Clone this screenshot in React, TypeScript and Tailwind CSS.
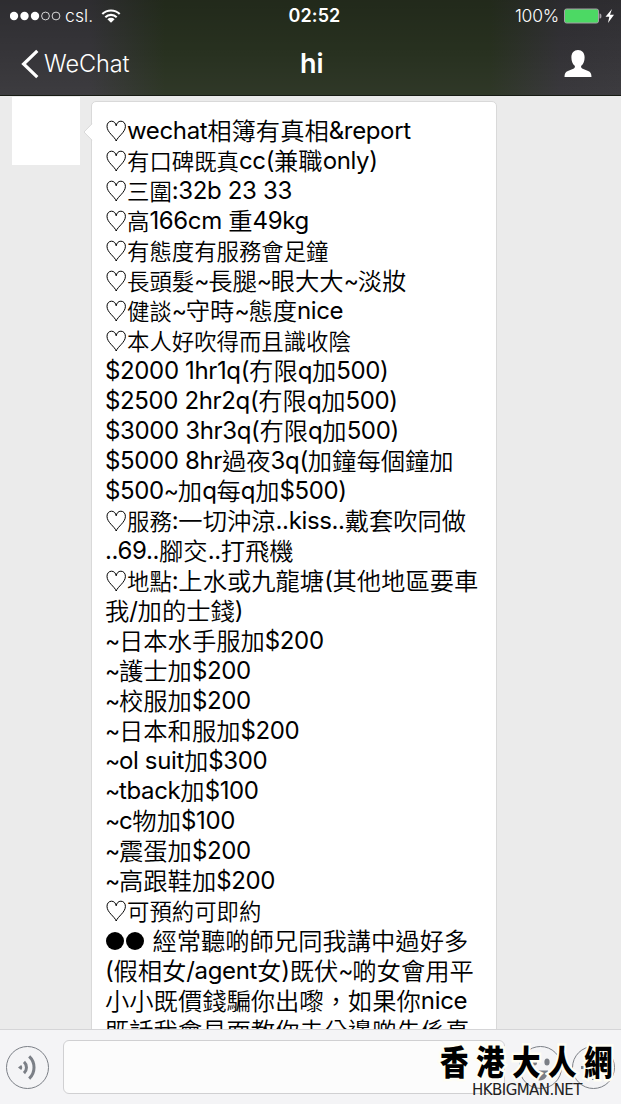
const MESSAGE = [
  "♡wechat相簿有真相&report",
  "♡有口碑既真cc(兼職only)",
  "♡三圍:32b 23 33",
  "♡高166cm 重49kg",
  "♡有態度有服務會足鐘",
  "♡長頭髮~長腿~眼大大~淡妝",
  "♡健談~守時~態度nice",
  "♡本人好吹得而且識收陰",
  "$2000 1hr1q(冇限q加500)",
  "$2500 2hr2q(冇限q加500)",
  "$3000 3hr3q(冇限q加500)",
  "$5000 8hr過夜3q(加鐘每個鐘加",
  "$500~加q每q加$500)",
  "♡服務:一切沖涼..kiss..戴套吹同做",
  "..69..腳交..打飛機",
  "♡地點:上水或九龍塘(其他地區要車",
  "我/加的士錢)",
  "~日本水手服加$200",
  "~護士加$200",
  "~校服加$200",
  "~日本和服加$200",
  "~ol suit加$300",
  "~tback加$100",
  "~c物加$100",
  "~震蛋加$200",
  "~高跟鞋加$200",
  "♡可預約可即約",
  "●● 經常聽啲師兄同我講中過好多",
  "(假相女/agent女)既伏~啲女會用平",
  "小小既價錢騙你出嚟，如果你nice",
  "既話我會見面教你去分邊啲先係真",
];

export default function App() {
  return (
    <div className="flex h-[1104px] w-[621px] flex-col overflow-hidden bg-[#ebebeb] font-['Inter','Noto_Sans_CJK_TC',sans-serif]">
      <Header />
      <main className="flex min-h-0 flex-1 items-start overflow-hidden pl-3">
        <div className="mt-px h-[68px] w-[68px] shrink-0 bg-white" />
        <Bubble />
      </main>
      <InputBar />
    </div>
  );
}

function Header() {
  return (
    <header className="h-24 shrink-0 border-b border-[#171b14] bg-[linear-gradient(to_bottom,rgba(0,0,0,0.14),transparent_50%,rgba(255,255,255,0.04)),linear-gradient(to_right,#353438_0px,#353438_90px,#27301f_165px,#27301f_490px,#323135_560px,#353438_621px)] text-white">
      <div className="flex h-8 items-center pl-[10px] pr-[6px]">
        <div className="flex flex-1 items-center">
          <svg width="51" height="10" viewBox="0 0 51 10" fill="white">
            <circle cx="4" cy="5" r="4.2" />
            <circle cx="14.5" cy="5" r="4.2" />
            <circle cx="25" cy="5" r="4.2" />
            <g fill="none" stroke="white" strokeWidth="0.8">
              <circle cx="35.5" cy="5" r="3.9" />
              <circle cx="46" cy="5" r="3.9" />
            </g>
          </svg>
          <span className="ml-1 text-[17.5px] font-light leading-8 tracking-[0.1px]">csl.</span>
          <svg className="ml-[8px]" width="20" height="16" viewBox="0 0 20 16" fill="none" stroke="white" strokeWidth="2.1">
            <path d="M1.3 6.1a12.4 12.4 0 0 1 17.4 0M4.3 9.2a8.1 8.1 0 0 1 11.4 0" />
            <path d="M10 14.8 6.4 11.3a5.1 5.1 0 0 1 7.2 0z" fill="white" stroke="none" />
          </svg>
        </div>
        <span className="pl-1 text-[18px] font-semibold leading-8 tracking-[0.1px]">02:52</span>
        <div className="flex flex-1 items-center justify-end">
          <span className="text-[17.5px] font-light leading-8 tracking-[-0.2px]">100%</span>
          <svg className="ml-[5px]" width="51" height="16" viewBox="0 0 51 16">
            <rect x="0.5" y="1" width="34" height="14" rx="2" fill="#4cd964" stroke="#a5a1a6" />
            <path d="M35.5 5.5h.5a1.5 2.5 0 0 1 0 5h-.5z" fill="#a5a1a6" />
            <path d="M48 1 41.5 8.8h3.8L44 15l6-8.3h-4z" fill="white" />
          </svg>
        </div>
      </div>
      <div className="flex h-16 items-center pl-[21px] pr-[29px]">
        <div className="flex w-[279px] items-center">
          <svg width="18" height="30" viewBox="0 0 18 30" fill="none" stroke="white" strokeWidth="3.2">
            <path d="M16.3 1.8 2.6 15l13.7 13.2" />
          </svg>
          <span className="ml-[5px] text-[23.5px] font-light tracking-[-0.1px]">WeChat</span>
        </div>
        <h1 className="text-[27px] font-semibold leading-8">hi</h1>
        <div className="flex flex-1 justify-end">
          <svg width="28" height="28" viewBox="0 0 28 28" fill="white">
            <path d="M14 0c4 0 6.600 3 6.600 7.400 0 3.700-1.200 6.400-3.100 8.200-.8.8-.5 2.400.6 2.900l6 2.600c2.300 1 3.400 2.500 3.400 5.900H.5c0-3.400 1.100-4.900 3.400-5.900l6-2.600c1.100-.5 1.400-2.100.6-2.900C8.600 13.800 7.400 11.100 7.400 7.400 7.400 3 10 0 14 0z" />
          </svg>
        </div>
      </div>
    </header>
  );
}

function Bubble() {
  return (
    <div className="relative ml-[11px] mt-[5px] w-[406px] shrink-0 rounded-[5px] border border-[#d9d9d9] bg-white pl-[13px] pt-[14px]">
      <svg className="absolute -left-[9px] top-[21px]" width="10" height="18" viewBox="0 0 10 18">
        <path d="M10 0 1 9l9 9z" fill="white" />
        <path d="M9 .8 1 9l8 8.2" fill="none" stroke="#d9d9d9" />
      </svg>
      {MESSAGE.map((line, i) => (
        <Line key={i} text={line} />
      ))}
    </div>
  );
}

// Chinese characters that directly follow a heart are set a little smaller.
function Line({ text }: { text: string }) {
  const runs = text.match(/♡|●+|~|[\u4e00-\u9fff，]+|[\x20-\x7d]+/g) ?? [];

  return (
    <p className="flex h-[30px] whitespace-pre leading-[30px] text-black">
      {runs.map((run, i) => {
        if (run === "♡") return <Heart key={i} />;
        if (run[0] === "●") return <Dots key={i} count={run.length} />;
        if (run === "~")
          return <span key={i} className="w-[14px] text-[23px] tracking-[-1px]">~</span>;
        if (run.charCodeAt(0) < 128)
          return <span key={i} className="text-[24px] tracking-[-0.36px]">{run}</span>;
        if (runs[i - 1] === "♡")
          return <span key={i} className="-mt-px font-['Noto_Sans_CJK_TC',sans-serif] text-[22.4px] font-[350]">{run}</span>;
        return <span key={i} className="-mt-px font-['Noto_Sans_CJK_TC',sans-serif] text-[24.3px] font-[350]">{run}</span>;
      })}
    </p>
  );
}

function Heart() {
  return (
    <svg className="ml-[0.5px] mt-[4px] shrink-0" width="21.5" height="22" viewBox="0 0 21.5 22" fill="none" stroke="black" strokeWidth="1">
      <path d="M10.200 21C8.700 16.500 1 12.500 1 6.300 1 3.200 3 1.200 5.500 1.200c2.600 0 4.200 1.900 4.700 4.600.5-2.700 2.100-4.600 4.700-4.600 2.500 0 4.500 2 4.500 5.100 0 6.200-7.700 10.200-9.200 14.700z" />
    </svg>
  );
}

function Dots({ count }: { count: number }) {
  return (
    <span className="flex items-center gap-[2px] pl-px pr-[2px]">
      {Array.from({ length: count }, (_, i) => (
        <span key={i} className="h-[18px] w-[18px] rounded-full bg-black" />
      ))}
    </span>
  );
}

function InputBar() {
  return (
    <footer className="relative flex h-[75px] shrink-0 items-center gap-[14px] border-t border-[#d5d5d7] bg-[#f4f4f6] pl-[6px] pr-[6px]">
      <svg width="43" height="43" viewBox="0 0 43 43" fill="none" stroke="#7b7f86">
        <circle cx="21.5" cy="21.5" r="21" />
        <path d="M18 15.8a7.800 7.800 0 0 1 0 11.400M23.200 10.400a15.200 15.200 0 0 1 0 22.200" strokeWidth="3" />
        <path d="m12 21.500 3.200-2.500a4 4 0 0 1 0 5z" fill="#7b7f86" stroke="none" />
      </svg>
      <div className="h-[54px] flex-1 rounded-[6px] border border-[#d0d0d2] bg-[#fcfcfc]" />
      <div className="flex gap-[10px]">
        <svg width="43" height="43" viewBox="0 0 43 43" fill="none" stroke="#7b7f86">
          <circle cx="21.5" cy="21.5" r="21" />
          <g fill="#7b7f86" stroke="none">
            <ellipse cx="15.5" cy="16" rx="2.6" ry="3.5" />
            <ellipse cx="28" cy="16" rx="2.6" ry="3.5" />
            <path d="M12 24.5h17c0 6-3.500 10-8.500 10s-8.500-4-8.500-10z" />
          </g>
        </svg>
        <svg width="43" height="43" viewBox="0 0 43 43" fill="none" stroke="#7b7f86">
          <circle cx="21.5" cy="21.5" r="21" />
          <path d="M9 21.500h25M21.500 9v25" strokeWidth="3" />
        </svg>
      </div>
      <Watermark />
    </footer>
  );
}

function Watermark() {
  return (
    <div className="absolute left-[440px] top-[14px] w-[181px] text-black">
      <div className="flex h-[34px] font-['Noto_Sans_CJK_TC',sans-serif] text-[34px] font-black leading-[34px] [-webkit-text-stroke:5px_#fffef4] [paint-order:stroke_fill]">
        {[..."香港大人網"].map((char) => (
          <span key={char} className="w-9 shrink-0 origin-left scale-x-[0.84]">
            {char}
          </span>
        ))}
      </div>
      <div className="pl-[32px] pt-px font-['DejaVu_Sans',sans-serif] text-[15px] leading-[22px] tracking-[-0.55px] text-[#222]">
        HKBIGMAN.NET
      </div>
    </div>
  );
}
